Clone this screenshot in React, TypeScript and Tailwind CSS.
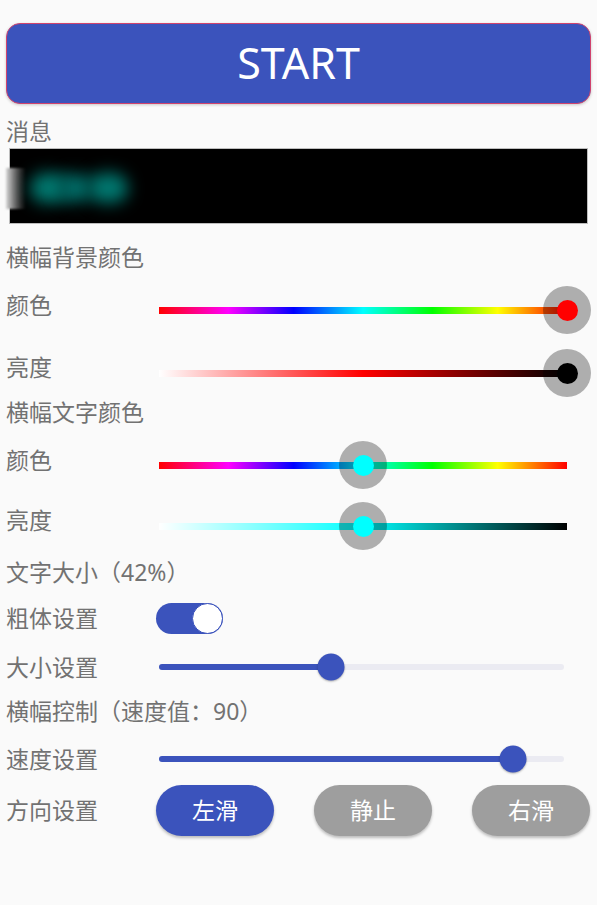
import React from "react";

const HUE =
  "linear-gradient(to right, #ff0000 0%, #ff00ff 17%, #0000ff 33%, #00ffff 50%, #00ff00 67%, #ffff00 83%, #ff0000 100%)";

function Label({ text, className = "" }: { text: string; className?: string }) {
  return (
    <div className={`w-[150px] shrink-0 pl-[6px] text-[23px] leading-none text-[#727272] ${className}`}>
      {text}
    </div>
  );
}

function Heading({ text, className = "" }: { text: string; className?: string }) {
  return (
    <div className={`flex h-[30px] items-center pl-[6px] text-[23px] text-[#727272] ${className}`}>
      {text}
    </div>
  );
}

function ColorSlider({ gradient, value, dot }: { gradient: string; value: number; dot: string }) {
  return (
    <div className="relative ml-[9px] h-[7px] w-[408px]" style={{ background: gradient }}>
      <div
        className="absolute top-1/2 flex h-[48px] w-[48px] -translate-x-1/2 -translate-y-1/2 items-center justify-center rounded-full bg-black/30"
        style={{ left: `${value * 100}%` }}
      >
        <div className="h-[21px] w-[21px] rounded-full" style={{ background: dot }} />
      </div>
    </div>
  );
}

function MaterialSlider({ value }: { value: number }) {
  return (
    <div className="relative ml-[9px] h-[6px] w-[405px] rounded-full bg-[#ebebf2]">
      <div className="h-full rounded-full bg-[#3b53bc]" style={{ width: `${value * 100}%` }} />
      <div
        className="absolute top-1/2 h-[27px] w-[27px] -translate-x-1/2 -translate-y-1/2 rounded-full bg-[#3b53bc] shadow-[0_1px_2px_rgba(0,0,0,0.3)]"
        style={{ left: `${value * 100}%` }}
      />
    </div>
  );
}

function DirButton({ text, active }: { text: string; active?: boolean }) {
  return (
    <button
      className={`flex h-[51px] w-[118px] items-center justify-center rounded-full text-[23px] text-white shadow-[0_2px_3px_rgba(0,0,0,0.25)] ${
        active ? "bg-[#3b53bc]" : "bg-[#9e9e9e]"
      }`}
    >
      {text}
    </button>
  );
}

export default function App() {
  return (
    <div
      className="flex h-[905px] w-[597px] flex-col bg-[#fafafa]"
      style={{ fontFamily: '"Noto Sans", "Noto Sans CJK SC", sans-serif' }}
    >
      <button className="mx-[6px] mt-[23px] flex h-[81px] items-center justify-center rounded-[14px] border border-[#d0436e] bg-[#3b53bc] text-[43px] text-white shadow-[0_1px_3px_rgba(0,0,0,0.2)]">
        START
      </button>

      <Heading text="消息" className="mt-[12px]" />
      <div className="relative mx-[9px] mt-[2px] h-[76px] border border-[#bdbdbd] bg-black">
        <div className="absolute left-[-4px] top-[19px] h-[41px] w-[22px] bg-gradient-to-r from-[#d8d8d8] via-[#555] to-black blur-[1px]" />
        <div className="absolute left-[20px] top-[24px] h-[30px] w-[38px] rounded-full bg-[#00786f] blur-[8px]" />
        <div className="absolute left-[48px] top-[25px] h-[28px] w-[34px] rounded-full bg-[#006b66] blur-[8px]" />
        <div className="absolute left-[78px] top-[24px] h-[30px] w-[40px] rounded-full bg-[#00776f] blur-[8px]" />
      </div>

      <Heading text="横幅背景颜色" className="mt-[18px]" />
      <div className="mt-[13px] flex h-[50px] items-center">
        <Label text="颜色" className="mb-[10px]" />
        <ColorSlider gradient={HUE} value={1} dot="#ff0000" />
      </div>
      <div className="mt-[13px] flex h-[50px] items-center">
        <Label text="亮度" className="mb-[12px]" />
        <ColorSlider
          gradient="linear-gradient(to right, #ffffff, #ff0000 50%, #000000)"
          value={1}
          dot="#000000"
        />
      </div>

      <Heading text="横幅文字颜色" className="mt-[-1px]" />
      <div className="mt-[13px] flex h-[50px] items-center">
        <Label text="颜色" className="mb-[10px]" />
        <ColorSlider gradient={HUE} value={0.5} dot="#00ffff" />
      </div>
      <div className="mt-[11px] flex h-[50px] items-center">
        <Label text="亮度" className="mb-[12px]" />
        <ColorSlider
          gradient="linear-gradient(to right, #ffffff, #00ffff 50%, #000000)"
          value={0.5}
          dot="#00ffff"
        />
      </div>

      <Heading text="文字大小（42%）" className="mt-[6px]" />
      <div className="mt-[11px] flex h-[40px] items-center">
        <Label text="粗体设置" />
        <div className="ml-[6px] flex h-[31px] w-[67px] items-center justify-end rounded-full bg-[#3b53bc]">
          <div className="h-[31px] w-[31px] rounded-full border border-[#3b53bc] bg-white" />
        </div>
      </div>
      <div className="mt-[9px] flex h-[40px] items-center">
        <Label text="大小设置" />
        <MaterialSlider value={0.425} />
      </div>

      <Heading text="横幅控制（速度值：90）" className="mt-[9px]" />
      <div className="mt-[13px] flex h-[40px] items-center">
        <Label text="速度设置" />
        <MaterialSlider value={0.874} />
      </div>
      <div className="mt-[6px] flex h-[51px] items-center">
        <Label text="方向设置" />
        <div className="ml-[6px] flex gap-[40px]">
          <DirButton text="左滑" active />
          <DirButton text="静止" />
          <DirButton text="右滑" />
        </div>
      </div>
    </div>
  );
}
